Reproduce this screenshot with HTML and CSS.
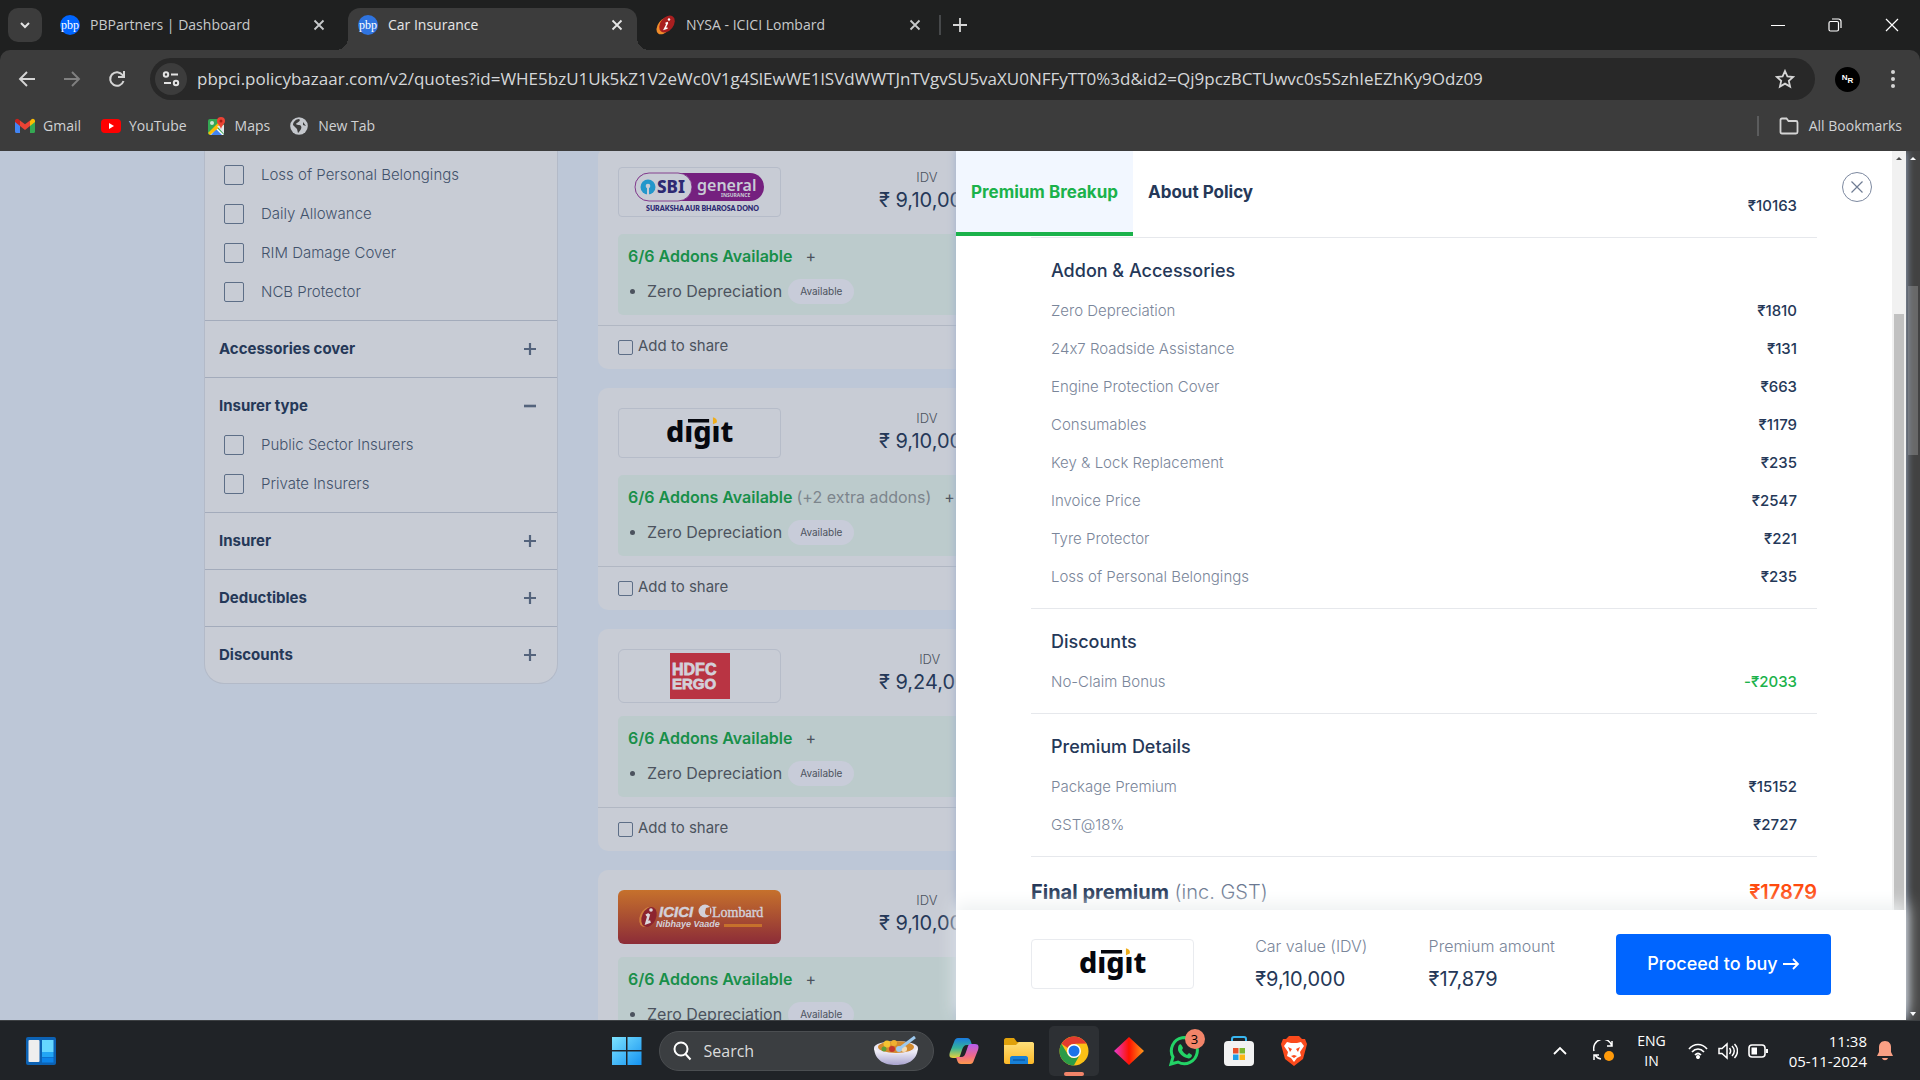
FILE: index.html
```html
<!DOCTYPE html>
<html lang="en">
<head>
<meta charset="utf-8">
<title>Car Insurance</title>
<link rel="stylesheet" href="styles.css">
</head>
<body>
<svg class="defs" aria-hidden="true">
  <defs>
    <symbol id="x" viewBox="0 0 12 12"><path d="M1.5 1.5l9 9M10.5 1.5l-9 9" stroke="currentColor" stroke-width="1.8"/></symbol>
    <symbol id="plus" viewBox="0 0 14 14"><path d="M7 1v12M1 7h12" stroke="currentColor" stroke-width="2.2"/></symbol>
    <symbol id="minus" viewBox="0 0 14 14"><path d="M1 7h12" stroke="currentColor" stroke-width="2.6"/></symbol>
    <symbol id="digit" viewBox="0 0 162 50">
      <text x="46" y="34" font-family="Noto Sans, sans-serif" font-weight="800" font-size="30" fill="#06080f">dıgıt</text>
      <path d="M69 10.500h22v3.500H69z" fill="#06080f"/>
      <path d="M95 8.500q5 1.500 4 5.500l-4 2z" fill="#f0ae1c"/>
    </symbol>
    <linearGradient id="g-icici" x1="0" y1="0" x2="0" y2="1"><stop offset="0" stop-color="#c6712c"/><stop offset="1" stop-color="#8c2c38"/></linearGradient>
    <linearGradient id="g-win" x1="0" y1="0" x2="1" y2="1"><stop offset="0" stop-color="#7de3ff"/><stop offset="1" stop-color="#1492f0"/></linearGradient>
    <linearGradient id="g-cop1" x1="0" y1="0" x2="0" y2="1"><stop offset="0" stop-color="#1a7be0"/><stop offset=".5" stop-color="#35b39a"/><stop offset="1" stop-color="#e9d13c"/></linearGradient>
    <linearGradient id="g-cop2" x1="0" y1="0" x2="0" y2="1"><stop offset="0" stop-color="#b45cf0"/><stop offset=".6" stop-color="#f06a8a"/><stop offset="1" stop-color="#ff9a4c"/></linearGradient>
    <linearGradient id="g-dia" x1="0" y1="0" x2="1" y2="0"><stop offset="0" stop-color="#e83ad0"/><stop offset=".5" stop-color="#ff1200"/><stop offset="1" stop-color="#ff9a1a"/></linearGradient>
    <linearGradient id="g-bowl" x1="0" y1="0" x2="0" y2="1"><stop offset="0" stop-color="#fff"/><stop offset="1" stop-color="#a9a3cf"/></linearGradient>
    <linearGradient id="g-fold" x1="0" y1="0" x2="0" y2="1"><stop offset="0" stop-color="#ffe07a"/><stop offset="1" stop-color="#fcb827"/></linearGradient>
  </defs>
</svg>

<header class="browser">
  <div class="tabstrip">
    <button class="tab-search" aria-label="Search tabs"><svg width="12" height="12" viewBox="0 0 12 12"><path d="M2 4l4 4 4-4" fill="none" stroke="#e3e3e3" stroke-width="2"/></svg></button>
    <div class="tab">
      <span class="pbp">pbp</span><span class="tab-title">PBPartners | Dashboard</span>
      <button class="tab-close" aria-label="Close tab"><svg width="12" height="12"><use href="#x"/></svg></button>
    </div>
    <div class="tab tab-active">
      <span class="pbp pbp-soft">pbp</span><span class="tab-title">Car Insurance</span>
      <button class="tab-close" aria-label="Close tab"><svg width="12" height="12"><use href="#x"/></svg></button>
    </div>
    <div class="tab">
      <svg width="20" height="20" viewBox="0 0 20 20"><ellipse cx="8" cy="11" rx="6" ry="9.500" transform="rotate(38 8 11)" fill="#f08c2a"/><ellipse cx="11" cy="9" rx="6.500" ry="9.500" transform="rotate(38 11 9)" fill="#a91f20"/><path d="M11.500 8l-3 6 3-1M9.500 8.500l2.500-1" stroke="#fff" stroke-width="1.500" fill="none"/><circle cx="13" cy="4.500" r="1.200" fill="#fff"/></svg>
      <span class="tab-title">NYSA - ICICI Lombard</span>
      <button class="tab-close" aria-label="Close tab"><svg width="12" height="12"><use href="#x"/></svg></button>
    </div>
    <span class="tab-sep"></span>
    <button class="new-tab" aria-label="New tab"><svg width="14" height="14" viewBox="0 0 14 14"><path d="M7 0v14M0 7h14" stroke="#d5d5d5" stroke-width="1.800"/></svg></button>
    <div class="win-controls">
      <button aria-label="Minimize"><svg width="14" height="14"><path d="M0 7.500h14" stroke="#fff"/></svg></button>
      <button aria-label="Restore"><svg width="14" height="14" viewBox="0 0 14 14" fill="none" stroke="#fff" stroke-width="1.200"><rect x="1" y="3.500" width="9.500" height="9.500" rx="1.500"/><path d="M4 1h6.500a2.500 2.500 0 0 1 2.500 2.500V10"/></svg></button>
      <button aria-label="Close"><svg width="14" height="14" viewBox="0 0 14 14"><path d="M1 1l12 12M13 1L1 13" stroke="#fff" stroke-width="1.200"/></svg></button>
    </div>
  </div>

  <div class="toolbar">
    <button class="nav" aria-label="Back"><svg width="18" height="18" viewBox="0 0 18 18" fill="none" stroke="#d5d5d5" stroke-width="1.900"><path d="M17 9H2M9 2L2 9l7 7"/></svg></button>
    <button class="nav" aria-label="Forward"><svg width="18" height="18" viewBox="0 0 18 18" fill="none" stroke="#808080" stroke-width="1.900"><path d="M1 9h15M9 2l7 7-7 7"/></svg></button>
    <button class="nav" aria-label="Reload"><svg width="18" height="18" viewBox="0 0 18 18" fill="none" stroke="#d5d5d5" stroke-width="2"><path d="M15.500 11A6.800 6.800 0 1 1 14.500 5l1 1.500M16 1v6h-6"/></svg></button>
    <div class="omnibox">
      <button class="site-info" aria-label="Site information"><svg width="18" height="18" viewBox="0 0 18 18" fill="none" stroke="#e3e3e3" stroke-width="2"><circle cx="4" cy="4.500" r="2.200"/><path d="M9 4.500h7M2 13h7"/><circle cx="14" cy="13" r="2.200"/></svg></button>
      <input type="text" aria-label="Address" value="pbpci.policybazaar.com/v2/quotes?id=WHE5bzU1Uk5kZ1V2eWc0V1g4SlEwWE1lSVdWWTJnTVgvSU5vaXU0NFFyTT0%3d&amp;id2=Qj9pczBCTUwvc0s5SzhIeEZhKy9Odz09">
      <button class="star" aria-label="Bookmark"><svg width="20" height="20" viewBox="0 0 20 20"><path d="M10 2l2.400 5.400 5.800.600-4.400 3.900 1.300 5.700-5.100-3-5.100 3 1.300-5.700L1.800 8l5.800-.600z" fill="none" stroke="#d5d5d5" stroke-width="1.800"/></svg></button>
    </div>
    <button class="avatar" aria-label="Profile">N<span>R</span></button>
    <button class="menu" aria-label="Menu"><svg width="6" height="20" viewBox="0 0 6 20" fill="#d5d5d5"><circle cx="3" cy="3" r="2"/><circle cx="3" cy="10" r="2"/><circle cx="3" cy="17" r="2"/></svg></button>
  </div>

  <nav class="bookmarks">
    <a href="#"><svg width="20" height="16" viewBox="0 0 20 16"><path d="M0 3v10.500c0 .800.500 1.500 1.500 1.500H5V6z" fill="#4285f4"/><path d="M20 3v10.500c0 .800-.500 1.500-1.500 1.500H15V6z" fill="#34a853"/><path d="M15 3v5l5-4V3c0-2-2-3-3.500-1.800z" fill="#fbbc04"/><path d="M5 8V2.500l5 3.800 5-3.800V8l-5 4z" fill="#ea4335"/><path d="M0 3v1l5 4V2.500L3.500 1.200C2 0 0 1 0 3z" fill="#c5221f"/></svg>Gmail</a>
    <a href="#"><svg width="20" height="16" viewBox="0 0 20 16"><rect y="1" width="20" height="14" rx="4" fill="#f00"/><path d="M8 5l5 3-5 3z" fill="#fff"/></svg>YouTube</a>
    <a href="#"><svg width="20" height="18" viewBox="0 0 20 18"><rect x="1" y="2" width="16" height="16" rx="2" fill="#34a853"/><path d="M9 10l8 8H3z" fill="#fff"/><path d="M9 12l6 6H4z" fill="#4285f4"/><path d="M1 16L12 5l3 3L3 18z" fill="#fbbc04"/><path d="M10 9l7 8V8z" fill="#e4e7ea"/><circle cx="5" cy="6" r="2" fill="#cfe6d4"/><path d="M14 0a4 4 0 0 1 4 4c0 3-3 4-4 8-1-4-4-5-4-8a4 4 0 0 1 4-4z" fill="#ea4335"/><circle cx="14" cy="4" r="1.500" fill="#a51d14"/></svg>Maps</a>
    <a href="#" class="new"><svg width="18" height="18" viewBox="0 0 18 18"><circle cx="9" cy="9" r="8.800" fill="#c4c7cc"/><path d="M9 2c2 1 0 3-2 4s0 2 2 2 3 2 2 4-3 4-3 4l-1-4-4-4c0-3 3-6 6-6zM13 5l3 4-3-1z" fill="#3c3c3c"/></svg>New Tab</a>
    <span class="bm-sep"></span>
    <a href="#" class="all"><svg width="20" height="18" viewBox="0 0 20 18"><path d="M1.500 3c0-1 .500-1.500 1.500-1.500h4.500l2 2.500H17c1 0 1.500.500 1.500 1.500V15c0 1-.500 1.500-1.500 1.500H3c-1 0-1.500-.500-1.500-1.500z" fill="none" stroke="#d5d5d5" stroke-width="1.800"/></svg>All Bookmarks</a>
  </nav>
</header>

<main class="viewport">
  <div class="page">
    <aside class="filters">
      <section class="group">
        <label class="check"><input type="checkbox">Loss of Personal Belongings</label>
        <label class="check"><input type="checkbox">Daily Allowance</label>
        <label class="check"><input type="checkbox">RIM Damage Cover</label>
        <label class="check"><input type="checkbox">NCB Protector</label>
      </section>
      <section class="group"><button class="group-head">Accessories cover<svg width="14" height="14"><use href="#plus"/></svg></button></section>
      <section class="group open">
        <button class="group-head">Insurer type<svg width="14" height="14"><use href="#minus"/></svg></button>
        <label class="check"><input type="checkbox">Public Sector Insurers</label>
        <label class="check"><input type="checkbox">Private Insurers</label>
      </section>
      <section class="group"><button class="group-head">Insurer<svg width="14" height="14"><use href="#plus"/></svg></button></section>
      <section class="group"><button class="group-head">Deductibles<svg width="14" height="14"><use href="#plus"/></svg></button></section>
      <section class="group"><button class="group-head">Discounts<svg width="14" height="14"><use href="#plus"/></svg></button></section>
    </aside>

    <div class="quotes">
      <article class="card">
        <div class="card-top">
          <div class="logo">
            <svg width="161" height="48" viewBox="0 0 161 48" role="img" aria-label="SBI General Insurance">
              <rect x="16" y="5" width="129" height="28" rx="14" fill="#75207f"/>
              <rect x="16" y="5" width="57" height="28" rx="14" fill="#c8ccd5" stroke="#75207f" stroke-width=".800"/>
              <circle cx="29" cy="19" r="7.500" fill="#2397cb"/><circle cx="29" cy="18" r="2.300" fill="#c8ccd5"/><path d="M28 19h2v8h-2z" fill="#c8ccd5"/>
              <text x="38" y="25" font-family="Noto Sans, sans-serif" font-weight="800" font-size="17" fill="#2d2a72">SBI</text>
              <text x="78" y="23" font-family="Noto Sans, sans-serif" font-weight="600" font-size="16" fill="#c8ccd5">general</text>
              <text x="102" y="29" font-family="Noto Sans, sans-serif" font-weight="700" font-size="5" fill="#c8ccd5">INSURANCE</text>
              <text x="27" y="43" font-family="Lato, sans-serif" font-weight="800" font-size="7" fill="#2d2a72">SURAKSHA AUR BHAROSA DONO</text>
            </svg>
          </div>
          <div class="idv"><span>IDV</span><strong>₹ 9,10,000</strong></div>
        </div>
        <div class="addons">
          <p class="addons-head">6/6 Addons Available<button>+</button></p>
          <ul><li>Zero Depreciation<span class="pill">Available</span></li></ul>
        </div>
        <div class="card-foot"><label><input type="checkbox">Add to share</label></div>
      </article>

      <article class="card">
        <div class="card-top">
          <div class="logo"><svg width="161" height="48" viewBox="0 0 162 50" role="img" aria-label="Digit"><use href="#digit"/></svg></div>
          <div class="idv"><span>IDV</span><strong>₹ 9,10,000</strong></div>
        </div>
        <div class="addons">
          <p class="addons-head">6/6 Addons Available <span>(+2 extra addons)</span><button>+</button></p>
          <ul><li>Zero Depreciation<span class="pill">Available</span></li></ul>
        </div>
        <div class="card-foot"><label><input type="checkbox">Add to share</label></div>
      </article>

      <article class="card">
        <div class="card-top">
          <div class="logo logo-tall">
            <svg width="60" height="46" viewBox="0 0 60 46" role="img" aria-label="HDFC ERGO"><path d="M0 0h60v46H0z" fill="#b93443"/><text x="2" y="22" font-family="Liberation Sans, sans-serif" font-weight="700" font-size="16" fill="#d3d0d9" stroke="#d3d0d9" stroke-width=".800">HDFC</text><text x="2" y="36" font-family="Liberation Sans, sans-serif" font-weight="700" font-size="15" fill="#d3d0d9" stroke="#d3d0d9" stroke-width=".800">ERGO</text></svg>
          </div>
          <div class="idv"><span>IDV</span><strong>₹ 9,24,000</strong></div>
        </div>
        <div class="addons">
          <p class="addons-head">6/6 Addons Available<button>+</button></p>
          <ul><li>Zero Depreciation<span class="pill">Available</span></li></ul>
        </div>
        <div class="card-foot"><label><input type="checkbox">Add to share</label></div>
      </article>

      <article class="card">
        <div class="card-top">
          <div class="logo logo-tall logo-full">
            <svg width="163" height="54" viewBox="0 0 163 54" role="img" aria-label="ICICI Lombard">
              <rect width="163" height="54" rx="6" fill="url(#g-icici)"/>
              <ellipse cx="29" cy="27" rx="7" ry="10.500" transform="rotate(25 29 27)" fill="#d0803f"/><ellipse cx="31" cy="27" rx="7" ry="10.500" transform="rotate(25 31 27)" fill="#8c2430"/>
              <path d="M31 24l-2.500 9 4-1.500M28 25.500l3-1.500" fill="none" stroke="#dcd7dd" stroke-width="2.500"/><circle cx="33" cy="20" r="1.800" fill="#dcd7dd"/>
              <text x="41" y="27" font-family="Liberation Sans, sans-serif" font-weight="700" font-style="italic" font-size="15" fill="#d3d0d9" stroke="#d3d0d9" stroke-width=".500">ICICI</text>
              <circle cx="87" cy="21" r="6.500" fill="#d3d0d9"/><path d="M88 18l4-1v8q-5 1-5-3z" fill="#b45c31"/>
              <text x="94" y="27" font-family="Liberation Serif, serif" font-size="14" fill="#d3d0d9" stroke="#d3d0d9" stroke-width=".400">Lombard</text>
              <text x="38" y="37" font-family="Liberation Sans, sans-serif" font-weight="700" font-style="italic" font-size="9" fill="#d3d0d9">Nibhaye Vaade</text>
              <path d="M106 35.500h38" stroke="#c6712c" stroke-width="3"/>
            </svg>
          </div>
          <div class="idv"><span>IDV</span><strong>₹ 9,10,000</strong></div>
        </div>
        <div class="addons">
          <p class="addons-head">6/6 Addons Available<button>+</button></p>
          <ul><li>Zero Depreciation<span class="pill">Available</span></li></ul>
        </div>
        <div class="card-foot"><label><input type="checkbox">Add to share</label></div>
      </article>
    </div>
  </div>

  <section class="drawer" aria-label="Premium breakup">
    <div class="drawer-body">
      <div class="drawer-scroll">
        <section class="block first"><table><tr><th scope="row"></th><td>₹10163</td></tr></table></section>
        <section class="block">
          <h3>Addon &amp; Accessories</h3>
          <table>
            <tr><th scope="row">Zero Depreciation</th><td>₹1810</td></tr>
            <tr><th scope="row">24x7 Roadside Assistance</th><td>₹131</td></tr>
            <tr><th scope="row">Engine Protection Cover</th><td>₹663</td></tr>
            <tr><th scope="row">Consumables</th><td>₹1179</td></tr>
            <tr><th scope="row">Key &amp; Lock Replacement</th><td>₹235</td></tr>
            <tr><th scope="row">Invoice Price</th><td>₹2547</td></tr>
            <tr><th scope="row">Tyre Protector</th><td>₹221</td></tr>
            <tr><th scope="row">Loss of Personal Belongings</th><td>₹235</td></tr>
          </table>
        </section>
        <section class="block">
          <h3>Discounts</h3>
          <table><tr><th scope="row">No-Claim Bonus</th><td class="minus">-₹2033</td></tr></table>
        </section>
        <section class="block">
          <h3>Premium Details</h3>
          <table>
            <tr><th scope="row">Package Premium</th><td>₹15152</td></tr>
            <tr><th scope="row">GST@18%</th><td>₹2727</td></tr>
          </table>
        </section>
        <p class="final"><span><b>Final premium</b> (inc. GST)</span><strong>₹17879</strong></p>
      </div>
      <div class="scrollbar light"><svg width="14" height="14"><path d="M4 9h6L7 6z" fill="#505050"/></svg><span class="thumb"></span></div>
      <div class="drawer-tabs"><button class="on">Premium Breakup</button><button>About Policy</button></div>
      <button class="close" aria-label="Close"><svg width="12" height="12" viewBox="0 0 12 12"><path d="M.500.500l11 11M11.500.500l-11 11" stroke="#6f7c93" stroke-width="1.200"/></svg></button>
    </div>
    <footer class="drawer-foot">
      <div class="logo logo-light"><svg width="161" height="48" viewBox="0 0 162 50" role="img" aria-label="Digit"><use href="#digit"/></svg></div>
      <div class="fact"><span>Car value (IDV)</span><strong>₹9,10,000</strong></div>
      <div class="fact"><span>Premium amount</span><strong>₹17,879</strong></div>
      <button class="proceed">Proceed to buy<svg width="18" height="14" viewBox="0 0 18 14"><path d="M1 7h15M11 2l5 5-5 5" fill="none" stroke="#fff" stroke-width="1.800"/></svg></button>
    </footer>
  </section>

  <div class="scrollbar dark"><svg width="14" height="14"><path d="M4 9h6L7 6z" fill="#fff"/></svg><span class="thumb"></span><svg width="14" height="14"><path d="M4 6h6L7 10z" fill="#fff"/></svg></div>
</main>

<footer class="taskbar">
  <div class="tb-left"><button class="app" aria-label="Widgets"><svg width="30" height="28" viewBox="0 0 30 28"><rect width="30" height="28" rx="2" fill="#0c62b4"/><rect x="2.500" y="3" width="11" height="22" rx="1" fill="#eee"/><rect x="16" y="3" width="11.500" height="12" fill="#66d7ff"/><rect x="16" y="15" width="11.500" height="5" fill="#22a6f5"/><rect x="16" y="20.500" width="11.500" height="5" fill="#0c84ea"/></svg></button></div>
  <div class="tb-center">
    <button class="app" aria-label="Start"><svg width="30" height="30" viewBox="0 0 30 30"><path d="M0 1h14v13H0zM15.500 1H29.500v13h-14zM0 15.500h14V29H0zM15.500 15.500h14V29h-14z" fill="url(#g-win)"/></svg></button>
    <div class="tb-search">
      <svg width="20" height="20" viewBox="0 0 20 20" fill="none" stroke="#fff" stroke-width="2"><circle cx="9" cy="8" r="6.500"/><path d="M13.500 13l5 5.500"/></svg>
      <input type="text" placeholder="Search" aria-label="Search">
      <svg width="46" height="30" viewBox="0 0 46 30"><ellipse cx="23" cy="12" rx="22" ry="7" fill="#e9e6f4"/><ellipse cx="23" cy="11" rx="18" ry="6" fill="#d28a2e"/><circle cx="14" cy="8" r="3.500" fill="#f6c331"/><circle cx="21" cy="7" r="3" fill="#f0b030"/><circle cx="19" cy="13" r="3" fill="#c5352b"/><circle cx="11" cy="13" r="2.500" fill="#5f9e36"/><circle cx="31" cy="13" r="3" fill="#f5dcb4"/><path d="M1 12c1 13 11 17 22 17s21-4 22-17c-4 4-13 6-22 6s-18-2-22-6z" fill="url(#g-bowl)"/><path d="M26 13L42 1" stroke="#9dc9ee" stroke-width="3"/><circle cx="26" cy="13" r="3" fill="#9dc9ee"/></svg>
    </div>
    <button class="app" aria-label="Copilot"><svg width="30" height="28" viewBox="0 0 30 28"><path d="M9 1h9c2 0 3 1 4 4l1 3h-5c-3 0-4 2-5 5l-2 6c-1 2-2 2-4 2H4c-4 0-4-3-3-6l4-10C6 2 7 1 9 1z" fill="url(#g-cop1)"/><path d="M21 27h-9c-2 0-3-1-4-4l-1-3h5c3 0 4-2 5-5l2-6c1-2 2-2 4-2h3c4 0 4 3 3 6l-4 10c-1 3-2 4-4 4z" fill="url(#g-cop2)"/></svg></button>
    <button class="app" aria-label="File Explorer"><svg width="30" height="28" viewBox="0 0 30 28"><path d="M0 3c0-1 1-2 2-2h8l3 4h15c1 0 2 1 2 2v6H0z" fill="#e0a10b"/><path d="M0 8h12l3-3h13c1 0 2 1 2 2v18c0 1-1 2-2 2H2c-1 0-2-1-2-2z" fill="url(#g-fold)"/><path d="M6 27v-6c0-1 1-2 2-2h14c1 0 2 1 2 2v6z" fill="#1780d8"/><path d="M9 23h12" stroke="#0c5ba8" stroke-width="1.500"/></svg></button>
    <button class="app app-on" aria-label="Google Chrome"><svg width="30" height="30" viewBox="0 0 30 30"><circle cx="15" cy="15" r="14.500" fill="#fbc116"/><path d="M2.500 7.700A14.500 14.500 0 0 1 27.600 7.800L15 8a7 7 0 0 0-6.300 4z" fill="#e33b2e"/><path d="M2.400 7.800A14.500 14.500 0 0 0 14.800 29.500L21 18.500a7 7 0 0 1-12.200-.300z" fill="#2b9b47"/><path d="M27.600 7.800H15a7 7 0 0 1 6.200 10.500z" fill="#fbc116"/><circle cx="15" cy="15" r="7" fill="#fff"/><circle cx="15" cy="15" r="5.500" fill="#1a73e8"/></svg></button>
    <button class="app" aria-label="Diamond app"><svg width="30" height="30" viewBox="0 0 30 30"><path d="M15 1l15 14-15 14L0 15z" fill="url(#g-dia)"/></svg></button>
    <button class="app" aria-label="WhatsApp"><svg width="32" height="32" viewBox="0 0 32 32"><path d="M3 29l2-7a13 13 0 1 1 5 5z" fill="none" stroke="#23d366" stroke-width="3"/><path d="M11 10c1-1 2-1 3 1l1 2-1 2c1 2 3 4 5 5l2-2 3 2c0 3-3 4-5 3-5-1-8-5-9-8 0-2 0-4 1-5z" fill="#23d366"/></svg><span class="badge">3</span></button>
    <button class="app" aria-label="Microsoft Store"><svg width="30" height="30" viewBox="0 0 30 30"><path d="M8 7V3c0-1 1-2 2-2h10c1 0 2 1 2 2v4" fill="none" stroke="#38b6f0" stroke-width="2"/><rect y="5" width="30" height="25" rx="4" fill="#f2f2f2"/><path d="M9 12h5.500v5.500H9z" fill="#e8502a"/><path d="M15.500 12H21v5.500h-5.500z" fill="#7db72f"/><path d="M9 18.500h5.500V24H9z" fill="#1f9fe8"/><path d="M15.500 18.500H21V24h-5.500z" fill="#fbb615"/></svg></button>
    <button class="app" aria-label="Brave"><svg width="26" height="30" viewBox="0 0 26 30"><path d="M8 0h10l3 3 3 0 2 5-1 4-3 11-9 7-9-7L1 12 0 8l2-5h3z" fill="#fb4a1c"/><path d="M6 6l4 1h6l4-1 3 4-4 6 1 4-4 2-3 4-3-4-4-2 1-4-4-6z" fill="#fff"/><path d="M7 11l4 2-2 3zM19 11l-4 2 2 3zM10 20l3 2 3-2-3-1z" fill="#fb4a1c"/></svg></button>
  </div>
  <div class="tb-right">
    <svg width="14" height="10" viewBox="0 0 14 10"><path d="M1 8l6-6 6 6" fill="none" stroke="#fff" stroke-width="1.800"/></svg>
    <svg class="sync" width="22" height="22" viewBox="0 0 22 22"><path d="M1 11A9 9 0 0 1 19 6M19 1v5h-5M8 19a9 9 0 0 1-6-4M1 20v-5h5" fill="none" stroke="#fff" stroke-width="1.500"/><circle cx="16" cy="16" r="5" fill="#ff9a0a"/></svg>
    <span class="lang">ENG<br>IN</span>
    <svg width="20" height="16" viewBox="0 0 20 16" fill="none" stroke="#fff" stroke-width="1.700"><path d="M1 6c5-6 13-6 18 0M4 9c3.500-4 8.500-4 12 0M7 12c2-2 4-2 6 0"/><circle cx="10" cy="14" r="1.200" fill="#fff"/></svg>
    <svg width="20" height="18" viewBox="0 0 20 18" fill="none" stroke="#fff" stroke-width="1.500"><path d="M1 6.500h3l5-4.500v14l-5-4.500H1zM11.500 6c1.500 2 1.500 4 0 6M14 4c3 3 3 7 0 10M16.500 2c4 4 4 10 0 14"/></svg>
    <svg width="20" height="14" viewBox="0 0 20 14"><rect x="1" y="1" width="16" height="12" rx="3" fill="none" stroke="#fff" stroke-width="1.600"/><path d="M3.500 3.500H9v7H3.500zM18 5h2v4h-2z" fill="#fff"/></svg>
    <time class="clock">11:38<br>05-11-2024</time>
    <svg width="16" height="20" viewBox="0 0 16 20" fill="#f9a084"><path d="M8 0c4 0 6 3 6 6v5l2 4H0l2-4V6c0-3 2-6 6-6zM5 17h6c-1 3-5 3-6 0z"/></svg>
  </div>
</footer>
</body>
</html>
```
FILE: styles.css
```css
* { box-sizing: border-box; }

body {
  margin: 0;
  height: 100vh;
  display: flex;
  flex-direction: column;
  overflow: hidden;
  font-family: Inter, sans-serif;
  font-size: 15px;
  font-variant-ligatures: no-contextual;
  line-height: 20px;
  color: #253858;
}

button, input { font: inherit; color: inherit; }
button { border: 0; padding: 0; background: none; }
svg { display: block; flex: none; }
h3, p, ul { margin: 0; padding: 0; }
.defs { position: absolute; width: 0; height: 0; }

/* Browser frame */
.browser { font-family: "Open Sans", sans-serif; font-size: 14px; color: #d0d2d4; background: #1f2020; }
.tabstrip { display: flex; align-items: stretch; height: 50px; padding: 8px 0 0 8px; }
.tab-search { display: grid; place-items: center; width: 34px; height: 34px; margin-right: 8px; border-radius: 10px; background: #3c3c3c; }
.tab { position: relative; display: flex; align-items: center; gap: 10px; width: 289px; padding: 0 14px 8px 10px; color: #c7c9cb; }
.tab + .tab { margin-left: 9px; }
.tab-active { color: #e6e6e6; border-radius: 12px 12px 0 0; background: #3c3c3c; }
.tab-active::before, .tab-active::after { content: ""; position: absolute; bottom: 0; width: 12px; height: 12px; }
.tab-active::before { right: 100%; background: radial-gradient(circle at 0 0, transparent 12px, #3c3c3c 12px); }
.tab-active::after { left: 100%; background: radial-gradient(circle at 100% 0, transparent 12px, #3c3c3c 12px); }
.tab-title { flex: 1; white-space: nowrap; }
.tab-close { width: 12px; height: 12px; }
.pbp { display: grid; place-items: center; width: 20px; height: 20px; border-radius: 50%; background: #0065ff; color: #fff; font: 12px/20px "Liberation Serif", serif; }
.pbp-soft { background: #2f74e0; }
.tab-sep { width: 2px; height: 20px; margin: 7px 12px 0 4px; background: #46484a; }
.new-tab { width: 14px; height: 34px; }
.win-controls { display: flex; margin-left: auto; }
.win-controls button { display: grid; place-items: center; width: 57px; height: 34px; }

.toolbar { display: flex; align-items: center; height: 58px; padding: 0 24px 0 4px; border-radius: 10px 10px 0 0; background: #3c3c3c; }
.nav { display: grid; place-items: center; width: 45px; height: 42px; }
.omnibox { display: flex; flex: 1; align-items: center; height: 42px; margin-left: 11px; padding: 0 20px 0 5px; border-radius: 21px; background: #282828; }
.site-info { display: grid; place-items: center; width: 32px; height: 32px; border-radius: 50%; background: #3c3c3c; }
.omnibox input { flex: 1; min-width: 0; padding: 0 10px; border: 0; outline: 0; background: none; font-size: 17px; color: #d5d7d9; }
.avatar { width: 25px; height: 25px; margin: 0 30px 0 20px; border-radius: 50%; background: #000; color: #fff; font: bold 8px/20px "Liberation Sans", sans-serif; }
.avatar span { vertical-align: sub; }

.bookmarks { display: flex; align-items: center; height: 43px; padding: 0 18px 8px 15px; background: #3c3c3c; }
.bookmarks a { display: flex; align-items: center; gap: 8px; margin-right: 20px; color: inherit; text-decoration: none; }
.bookmarks .new { gap: 10px; }
.bm-sep { width: 2px; height: 20px; margin: 0 20px 0 auto; background: #5b5c5d; }
.bookmarks .all { gap: 10px; margin-right: 0; }

/* Page behind the drawer */
.viewport { position: relative; display: flex; flex: 1; min-height: 0; overflow: hidden; background: #bdc7d7; }
.page { display: flex; flex: 1; gap: 40px; align-items: flex-start; max-width: 1498px; margin: 0 auto; }
.filters { width: 354px; border: 1px solid #b3bac8; border-top: 0; border-radius: 0 0 20px 20px; background: #c8ccd5; color: #42526b; }
.group { border-bottom: 1px solid #a3abbb; }
.group:last-child { border-bottom: 0; }
.group:first-child { padding: 4px 0 9px; }
.group-head { display: flex; align-items: center; justify-content: space-between; width: 100%; padding: 18px 20px 18px 14px; font-size: 15px; font-weight: 700; color: #253858; text-align: left; }
.group-head svg { color: #54637c; }
.open { padding-bottom: 9px; }
.open .group-head { padding-bottom: 9px; }
.check { display: flex; align-items: center; gap: 17px; height: 39px; padding-left: 19px; font-weight: 300; }
input[type="checkbox"] { appearance: none; flex: none; width: 20px; height: 20px; margin: 0; border: 1px solid #5d6e87; border-radius: 2px; }

.quotes { display: flex; flex: 1; flex-direction: column; gap: 19px; margin-top: -4px; }
.card { border-radius: 10px; background: #c8ccd5; color: #4c535e; }
.card-top { display: flex; gap: 98px; height: 87px; padding: 20px 20px 0; }
.logo { display: grid; place-items: center; width: 163px; height: 50px; border: 1px solid #b6bcc9; border-radius: 4px; }
.logo-tall { height: 54px; border-radius: 6px; }
.logo-full { border: 0; }
.logo-light { border-color: #e9ebef; }
.idv { display: flex; flex-direction: column; align-items: center; padding-top: 1px; white-space: nowrap; }
.idv span { font-size: 13px; font-weight: 300; line-height: 19px; }
.idv strong { font-size: 20px; font-weight: 400; line-height: 27px; color: #253858; }
.addons { height: 81px; margin: 0 20px 10px; padding: 10px 10px 0; border-radius: 5px; background: #bccbcc; font-size: 16px; white-space: nowrap; }
.addons-head { font-weight: 600; line-height: 25px; color: #188f49; }
.addons-head span { font-weight: 400; color: #7c858c; }
.addons-head button { margin-left: 13px; font-weight: 400; color: #4c535e; }
.addons ul { margin-top: 10px; list-style: none; }
.addons li { display: flex; align-items: center; line-height: 25px; }
.addons li::before { content: ""; width: 5px; height: 5px; margin: 0 12px 0 2px; border-radius: 50%; background: #4c535e; }
.pill { margin-left: 6px; padding: 0 12px; border-radius: 13px; background: #c8ccd9; font-size: 10px; }
.card-foot { height: 44px; padding: 10px 20px; border-top: 1px solid #b1b7c3; }
.card-foot label { display: flex; align-items: center; gap: 5px; font-size: 15px; }
.card-foot input[type="checkbox"] { width: 15px; height: 15px; margin-top: 3px; }

/* Premium drawer */
.drawer { position: absolute; top: 0; right: 14px; bottom: 0; display: flex; flex-direction: column; width: 950px; max-width: 100%; background: #fff; box-shadow: 0 0 8px #9fb0cc; }
.drawer-body { position: relative; display: flex; flex: 1; min-height: 0; overflow: hidden; }
.drawer-scroll { flex: 1; padding: 0 75px; }
.drawer-tabs { position: absolute; top: 0; left: 0; display: flex; }
.drawer-tabs button { height: 85px; padding: 0 15px; border-bottom: 4px solid transparent; font-size: 17px; font-weight: 700; }
.drawer-tabs .on { border-color: #1bb24b; background: #f2f7ff; color: #1bb24b; }
.close { position: absolute; top: 21px; right: 34px; display: grid; place-items: center; width: 30px; height: 30px; border: 1px solid #7d89a0; border-radius: 50%; }

.block { padding: 21px 20px 12px; border-bottom: 1px solid #e6e8ec; }
.first { padding-top: 36px; }
.block h3 { margin-bottom: 9px; font-size: 18px; font-weight: 500; line-height: 24px; }
.block table { width: 100%; border-collapse: collapse; }
.block tr { height: 38px; }
.block th, .block td { padding: 0; }
.block th { font-weight: 300; color: #7a869a; text-align: left; }
.block td { font-weight: 500; text-align: right; }
.block .minus { color: #1bb24b; }
.final { display: flex; align-items: center; justify-content: space-between; height: 70px; font-size: 20px; font-weight: 300; color: #6b7891; }
.final b { font-weight: 700; color: #253858; }
.final strong { font-weight: 600; color: #ff4a0d; }

.drawer-foot { position: relative; display: flex; align-items: center; justify-content: space-between; height: 110px; padding: 0 75px 2px; background: #fff; box-shadow: 0 -6px 16px #eef1f2; }
.fact { display: flex; flex-direction: column; gap: 10px; }
.fact span { font-size: 16px; font-weight: 300; color: #7a869a; line-height: 20px; }
.fact strong { font-size: 20px; font-weight: 400; line-height: 26px; }
.proceed { display: flex; align-items: center; justify-content: center; gap: 4px; width: 215px; height: 61px; border-radius: 4px; background: #0065ff; color: #fff; font-size: 18px; font-weight: 500; }

.scrollbar { display: flex; flex: none; flex-direction: column; width: 14px; }
.scrollbar .thumb { flex: 1; margin: 0 2px; }
.light { background: #f1f1f1; }
.light .thumb { margin-top: 149px; background: #c1c1c1; }
.dark { justify-content: space-between; background: #424242; }
.dark .thumb { flex: none; height: 169px; margin: 121px 2px auto; background: #686868; }

/* Taskbar */
.taskbar { display: grid; grid-template-columns: 1fr auto 1fr; align-items: center; height: 60px; border-top: 1px solid #3d4043; background: #202327; color: #fff; font-family: "Open Sans", sans-serif; }
.tb-left { padding-left: 16px; }
.tb-center { display: flex; align-items: center; gap: 5px; }
.app { position: relative; display: grid; place-items: center; width: 50px; height: 50px; border-radius: 5px; }
.app-on { background: #2d3034; }
.app-on::after { content: ""; position: absolute; bottom: 0; left: 15px; width: 20px; height: 4px; border-radius: 2px; background: #f28469; }
.badge { position: absolute; top: 3px; right: 4px; width: 20px; height: 20px; border-radius: 50%; background: #f28469; color: #000; font-size: 13px; line-height: 20px; }
.tb-search { display: flex; align-items: center; width: 275px; height: 40px; margin-left: 2px; padding: 0 14px 0 12px; border: 1px solid #4b4e51; border-radius: 20px; background: #3b3e41; }
.tb-search input { flex: 1; min-width: 0; padding: 0 12px; border: 0; outline: 0; background: none; font-size: 16px; }
.tb-search input::placeholder { color: #dcdcdc; }
.tb-right { display: flex; align-items: center; justify-content: flex-end; gap: 10px; padding-right: 27px; font-size: 14px; }
.sync { margin-left: 16px; }
.lang { margin: 0 12px; text-align: center; }
.clock { margin-left: 11px; font-size: 15px; text-align: right; }
```
